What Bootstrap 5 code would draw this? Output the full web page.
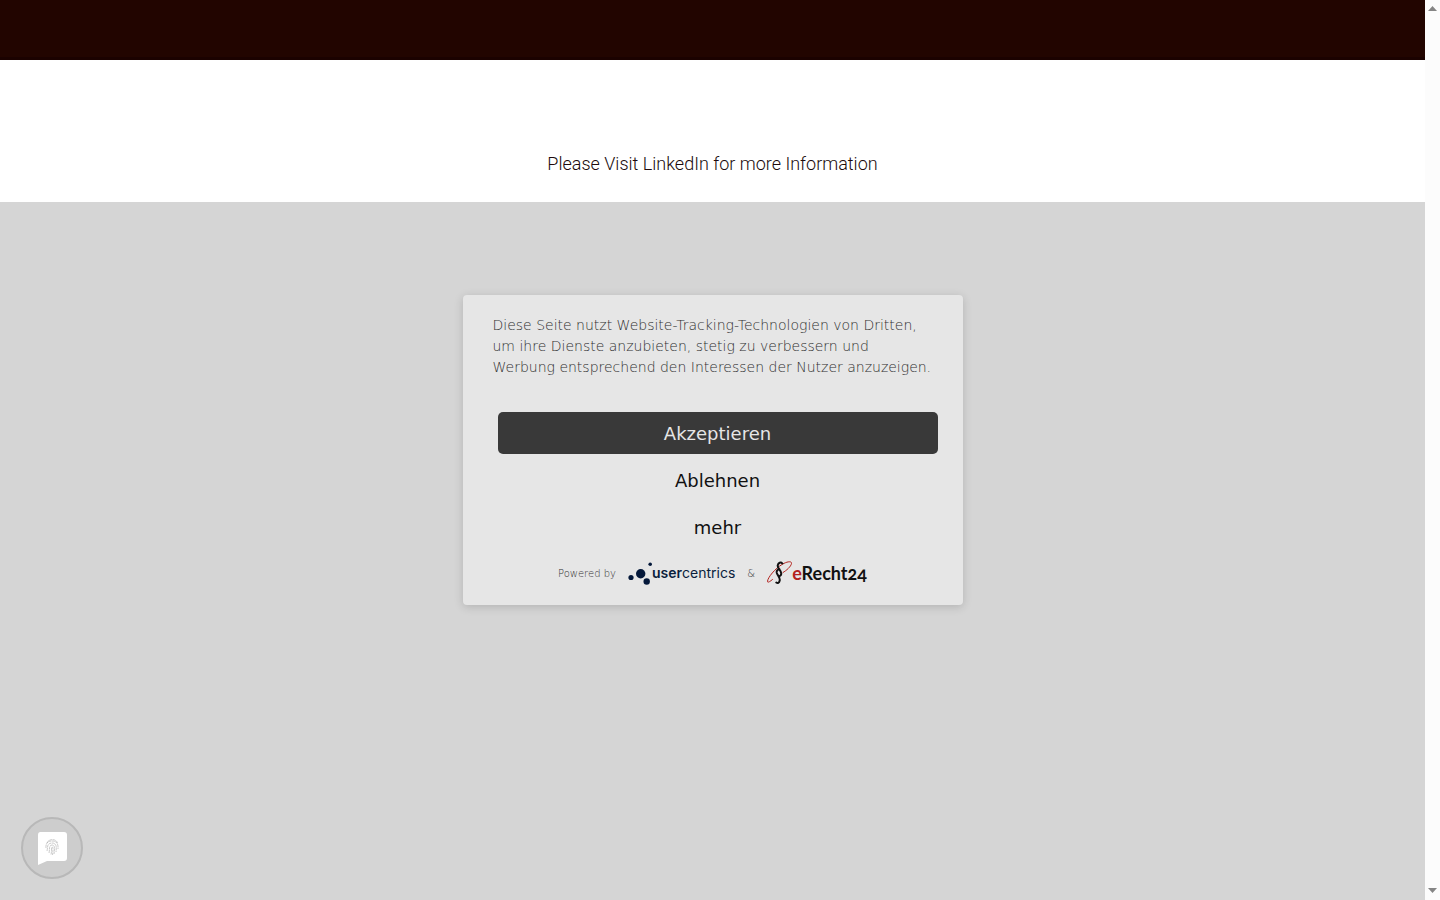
<!DOCTYPE html>
<html lang="de">
<head>
<meta charset="utf-8">
<meta name="viewport" content="width=device-width, initial-scale=1">
<title>Information</title>
<link rel="stylesheet" href="https://cdn.jsdelivr.net/npm/bootstrap@5.3.0/dist/css/bootstrap.min.css">
<style>
body { font-family: "DejaVu Sans", sans-serif; background: #fff; }
.page-top { height: 60px; background: #220500; border-bottom: 3px solid #1b0200; }
.intro { padding: 88px 16px 23px; font: 300 18px/31px "Roboto", sans-serif; color: #200a0c; }
.backdrop-area { background: #d5d5d5; }
.consent { width: 500px; max-width: 100%; padding: 20px 25px 20px 30px; background: #e6e6e6; border-radius: 4px; box-shadow: 0 2px 10px rgba(0,0,0,.16); }
.consent-text { font-size: 14px; line-height: 21px; font-weight: 200; color: #303030; padding-right: 5px; margin-bottom: 34px; }
.choices { gap: 5px; padding-left: 5px; margin-bottom: 13px; }
.choices .btn { height: 42px; padding: 0; border: 0; font-size: 18px; color: #111; border-radius: 5px; }
.choices .btn-accept { background: #393939; color: #e6e6e6; }
.powered { height: 24px; font-size: 10px; font-weight: 200; color: #303030; margin-right: 5px; }
.powered a { color: inherit; text-decoration: none; }
.uc-name { font: 400 14px/24px "Inter", sans-serif; color: #0a1e3c; }
.uc-name b { font-weight: 600; }
.er-name { font: 700 18px/26px "Lato", sans-serif; font-variant-numeric: oldstyle-nums; color: #111; }
.er-name span { color: #b3221d; }
.privacy { left: 21px; bottom: 21px; width: 62px; height: 62px; border: 2px solid #b8b8b8; background: #cdcdcd; }
.scroll-strip { width: 15px; background: #fcfcfc; padding: 6px 0 7px; }
</style>
</head>
<body>
<div class="d-flex min-vh-100">
  <div class="flex-grow-1 d-flex flex-column position-relative">
    <header class="page-top"></header>
    <p class="intro text-center m-0">Please Visit LinkedIn for more Information</p>
    <main class="backdrop-area flex-grow-1"></main>
    <div class="position-absolute top-0 start-0 w-100 h-100 d-flex align-items-center justify-content-center">
      <section class="consent" role="dialog" aria-label="Datenschutz">
        <p class="consent-text">Diese Seite nutzt Website-Tracking-Technologien von Dritten, um ihre Dienste anzubieten, stetig zu verbessern und Werbung entsprechend den Interessen der Nutzer anzuzeigen.</p>
        <div class="choices d-flex flex-column">
          <button type="button" class="btn btn-accept">Akzeptieren</button>
          <button type="button" class="btn">Ablehnen</button>
          <button type="button" class="btn">mehr</button>
        </div>
        <div class="powered d-flex align-items-center justify-content-center">
          <span>Powered by</span>
          <a href="#" class="d-flex align-items-center ms-2 ps-1">
            <svg width="24" height="24" viewBox="0 0 24 24" fill="#04183a" aria-hidden="true"><circle cx="3" cy="16.500" r="2.600"/><circle cx="12.700" cy="12.700" r="4.700"/><circle cx="22.200" cy="3.300" r="1.800"/><circle cx="18.700" cy="20.500" r="3.200"/></svg>
            <span class="uc-name"><b>user</b>centrics</span>
          </a>
          <span class="mx-2 px-1">&amp;</span>
          <a href="#" class="d-flex align-items-center">
            <svg width="25" height="24" viewBox="0 0 25 24" fill="none" stroke-linecap="round" aria-hidden="true">
              <path d="M5.500 18.500C2.500 21 .4 22 .5 20.300C.8 16.500 8 7.500 15.500 3.200C20.500 .2 25 0 24.500 2.500C24 5.500 19.500 9.500 16 11.500" stroke="#b3221d" stroke-width="1"/>
              <path d="M15.300 2.500C14 .7 11.200 1.500 10.700 4.500C10.300 7.500 14.800 9.500 14.200 13C13.900 14.600 12.600 15.500 11.500 15M12.500 8.200C10.500 8.500 9.300 10 9.800 12C10.500 14.500 13.400 16.300 12.700 19.500C12.100 22.200 10.600 22.500 9.300 21.500" stroke="#111" stroke-width="2"/>
            </svg>
            <span class="er-name"><span>e</span>Recht24</span>
          </a>
        </div>
      </section>
    </div>
    <button type="button" class="privacy position-absolute rounded-circle p-0 d-flex align-items-center justify-content-center" aria-label="Privatsphäre-Einstellungen">
      <svg width="31" height="34" viewBox="0 0 31 34" aria-hidden="true">
        <path d="M3.500 1H27Q30 1 30 4V27Q30 30 27 30H10L1 34V4Q1 1 3.500 1Z" fill="#fff"/>
        <g fill="none" stroke="#a8a8a8" stroke-width=".6" stroke-dasharray="3 .5">
          <path d="M10 12C11 8 19 7 20.500 12M9 17C8.500 11 12 10 15 10C19 10 21.500 12 21 18M10 20C11 16 9.500 12.500 15 12C20 12 19.500 17 19 21M12 22C13 18 11.500 14.500 15 14C18.500 14 17.500 19 17 23M14 23.500C15 20 14 17 15 16C16.500 16 16 20 15.500 24"/>
        </g>
      </svg>
    </button>
  </div>
  <div class="scroll-strip d-flex flex-column align-items-center justify-content-between flex-shrink-0" aria-hidden="true">
    <svg width="9" height="5" viewBox="0 0 9 5"><path d="M0 5L4.500 0L9 5Z" fill="#858585"/></svg>
    <svg width="9" height="5" viewBox="0 0 9 5"><path d="M0 0L4.500 5L9 0Z" fill="#858585"/></svg>
  </div>
</div>
<script src="https://cdn.jsdelivr.net/npm/bootstrap@5.3.0/dist/js/bootstrap.bundle.min.js"></script>
</body>
</html>
